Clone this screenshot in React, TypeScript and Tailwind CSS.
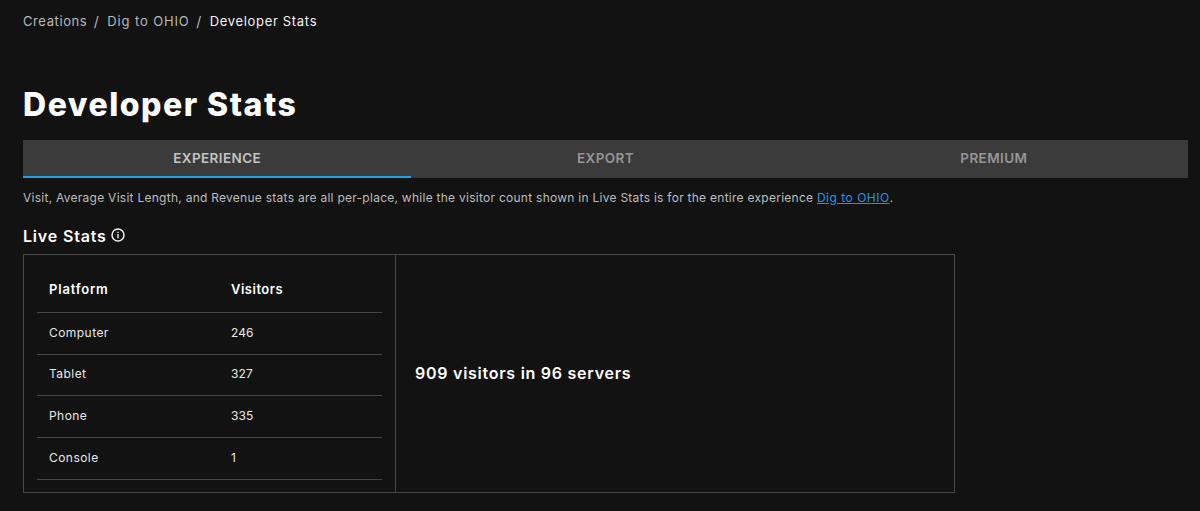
import { Fragment, useState } from "react";
import clsx from "clsx";

const tabs = ["Experience", "Export", "Premium"];

const crumbs = [
  { label: "Creations", spacing: "tracking-[0.6px]" },
  { label: "Dig to OHIO", spacing: "tracking-[0.87px]" },
];

const platforms = [
  { name: "Computer", visitors: 246 },
  { name: "Tablet", visitors: 327 },
  { name: "Phone", visitors: 335 },
  { name: "Console", visitors: 1 },
];

function InfoIcon() {
  return (
    <svg className="w-3.5 h-3.5" viewBox="0 0 14 14" fill="none">
      <circle cx="7" cy="7" r="6" stroke="#f0f0f0" strokeWidth="1.5" />
      <path d="M7 6.1v4.2M7 3.7v1.3" stroke="#f0f0f0" strokeWidth="1.4" />
    </svg>
  );
}

export default function App() {
  const [active, setActive] = useState("Experience");

  return (
    <div className="h-[511px] overflow-hidden bg-[#121212] pl-[23px] pr-3 pt-3 font-['Inter',sans-serif] text-white">
      {/* Breadcrumbs */}
      <nav className="flex h-5 items-center whitespace-pre text-[13px] text-[#b8b8b8]">
        {crumbs.map((c) => (
          <Fragment key={c.label}>
            <a href="#" className={c.spacing}>{c.label}</a>
            <span className="w-5 pr-0.5 text-center text-sm">/</span>
          </Fragment>
        ))}
        <span className="tracking-[0.68px] text-[#f2f2f2]">Developer Stats</span>
      </nav>

      <h1 className="mt-[53px] h-10 text-[32px] leading-10 font-extrabold tracking-[1.5px]">
        <span>Developer Stats</span>
      </h1>

      {/* Tabs */}
      <div className="mt-[15px] flex h-[38px] bg-[#3b3b3b]">
        {tabs.map((tab) => (
          <button
            key={tab}
            onClick={() => setActive(tab)}
            className={clsx(
              "flex-1 border-b-2 text-[13.5px] font-semibold tracking-[0.4px] uppercase",
              active === tab ? "border-[#1ba1e8] text-[#c4c4c4]" : "border-transparent text-[#969696]"
            )}
          >
            <span>{tab}</span>
          </button>
        ))}
      </div>

      <p className="mt-2.5 h-5 whitespace-nowrap text-xs leading-5 tracking-[0.265px] text-[#bdbdbd]">
        <span>
          Visit, Average Visit Length, and Revenue stats are all per-place, while the visitor count shown in Live Stats is for the entire experience{" "}
          <a href="#" className="tracking-[0.5px] text-[#2196e8] underline">Dig to OHIO</a>.
        </span>
      </p>

      <div className="mt-4 flex h-6 items-center gap-1">
        <h2 className="text-base font-semibold tracking-[0.82px]">Live Stats</h2>
        <span className="-mt-[3px]"><InfoIcon /></span>
      </div>

      {/* Live stats panel */}
      <div className="mt-1.5 flex h-[239px] w-[932px] border border-[#484848]">
        <div className="w-[372px] border-r border-[#484848] px-[13px] pt-3">
          <div className="flex h-[46px] items-center border-b border-[#484848] pl-3 text-[13px] font-semibold">
            <span className="w-[182px] tracking-[0.8px]">Platform</span>
            <span className="tracking-[0.5px]">Visitors</span>
          </div>
          {platforms.map((p) => (
            <div key={p.name} className="flex h-[41.65px] items-center border-b border-[#484848] pl-3 pb-px text-xs tracking-[0.45px] text-[#e8e8e8]">
              <span className="w-[182px]">{p.name}</span>
              <span className="tracking-[0.1px]">{p.visitors}</span>
            </div>
          ))}
        </div>
        <div className="flex flex-1 items-center pb-0.5 pl-[19px] text-base font-semibold tracking-[0.74px]">
          <span>909 visitors in 96 servers</span>
        </div>
      </div>
    </div>
  );
}
